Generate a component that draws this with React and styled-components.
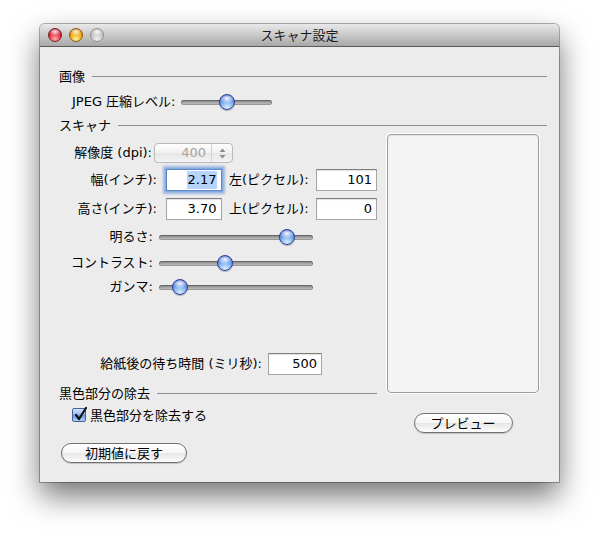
import styled, { createGlobalStyle, css } from "styled-components";

const GlobalStyle = createGlobalStyle`
  html, body {
    margin: 0;
    background: #fff;
  }
  body {
    min-height: 537px;
    font-family: "Lucida Grande", "DejaVu Sans", "Noto Sans CJK JP", sans-serif;
    font-size: 13px;
    color: #000;
  }
`;

const jp = `"Noto Sans CJK JP", "DejaVu Sans", sans-serif`;

const Page = styled.div`
  padding: 24px 0 55px 40px;
`;

const Window = styled.div`
  width: 519px;
  height: 458px;
  background: #ececec;
  border-radius: 5px 5px 0 0;
  box-shadow: 0 0 0 1px rgba(0, 0, 0, 0.3), 0 14px 30px rgba(0, 0, 0, 0.55);
  display: flex;
  flex-direction: column;
`;

const TitleBar = styled.div`
  height: 22px;
  flex-shrink: 0;
  display: grid;
  grid-template-columns: 1fr auto 1fr;
  align-items: center;
  border-radius: 5px 5px 0 0;
  background: linear-gradient(#e9e9e9, #c9c9c9 50%, #a8a8a8);
  border-bottom: 1px solid #5a5a5a;
`;

const Title = styled.div`
  font-family: ${jp};
  font-size: 13px;
  line-height: 22px;
  color: #1c1c1c;
`;

const Lights = styled.div`
  display: flex;
  gap: 7px;
  padding-left: 8px;
`;

const lightColors = {
  red: ["#ffb0b0", "#e4263c", "#8e0e1c", "#7a1a22"],
  yellow: ["#fff0a0", "#f2a400", "#a26000", "#8a5a10"],
  grey: ["#f0f0f0", "#c4c4c4", "#9a9a9a", "#909090"],
};

const Light = styled.div`
  width: 14px;
  height: 14px;
  border-radius: 50%;
  box-sizing: border-box;
  border: 1px solid ${(p) => lightColors[p.$c][3]};
  background: radial-gradient(ellipse 55% 35% at 50% 22%, rgba(255, 255, 255, 0.9), rgba(255, 255, 255, 0)),
    radial-gradient(circle at 50% 85%, ${(p) => lightColors[p.$c][0]}, ${(p) => lightColors[p.$c][1]} 55%, ${(p) => lightColors[p.$c][2]});
`;

const Content = styled.div`
  padding: 20px 12px 0 19px;
`;

const SectionHead = styled.div`
  display: flex;
  align-items: center;
  height: 18px;
  line-height: 18px;
  font-family: ${jp};
  margin-top: ${(p) => p.$mt || 0}px;
  &::after {
    content: "";
    flex: 1;
    height: 1px;
    margin-left: 7px;
    background: #8e8e8e;
  }
`;

const Row = styled.div`
  display: flex;
  align-items: center;
  height: ${(p) => p.$h || 18}px;
  margin-top: ${(p) => p.$mt || 0}px;
  padding-left: ${(p) => p.$indent || 0}px;
`;

const Label = styled.div`
  width: ${(p) => p.$w}px;
  margin-right: ${(p) => p.$mr || 0}px;
  flex-shrink: 0;
  text-align: right;
  white-space: nowrap;
  line-height: 18px;
  color: #000;
`;

const Columns = styled.div`
  display: grid;
  grid-template-columns: 318px 152px;
  column-gap: 10px;
`;

const LeftCol = styled.div`
  display: flex;
  flex-direction: column;
`;

const RightCol = styled.div`
  display: flex;
  flex-direction: column;
  align-items: center;
`;

const Popup = styled.div`
  width: 79px;
  height: 20px;
  box-sizing: border-box;
  border: 1px solid #b9b9b9;
  border-radius: 4px;
  background: linear-gradient(#fefefe, #f1f1f1 50%, #e6e6e6 51%, #f4f4f4);
  display: flex;
  align-items: stretch;
  color: #a3a3a3;
`;

const PopupValue = styled.div`
  flex: 1;
  text-align: right;
  padding-right: 5px;
  line-height: 18px;
`;

const PopupArrows = styled.div`
  width: 20px;
  border-left: 1px solid #d2d2d2;
  display: flex;
  align-items: center;
  justify-content: center;
`;

const Field = styled.div`
  width: ${(p) => p.$w}px;
  height: 22px;
  box-sizing: border-box;
  background: #fff;
  border: 1px solid #a4a4a4;
  border-top-color: #7e7e7e;
  box-shadow: inset 0 1px 1px rgba(0, 0, 0, 0.12);
  text-align: right;
  padding-right: 4px;
  line-height: 20px;
  ${(p) =>
    p.$focus &&
    css`
      border-color: #5f86c8;
      box-shadow: 0 0 0 1px #86aae0, 0 0 2px 3px rgba(110, 155, 222, 0.65);
    `}
`;

const Selected = styled.span`
  background: #b5d5ff;
  padding: 1px 0 2px 1px;
`;

const Track = styled.div`
  position: relative;
  width: ${(p) => p.$w}px;
  height: 5px;
  border-radius: 3px;
  background: linear-gradient(#7b7b7b, #a6a6a6 50%, #cbcbcb);
  box-shadow: inset 0 0 0 1px rgba(0, 0, 0, 0.22);
`;

const Knob = styled.div`
  position: absolute;
  top: 50%;
  width: 16px;
  height: 16px;
  margin: -8px 0 0 -8px;
  border-radius: 50%;
  box-sizing: border-box;
  border: 1px solid #2c3c9c;
  background: radial-gradient(ellipse 55% 35% at 50% 24%, rgba(255, 255, 255, 0.95), rgba(255, 255, 255, 0)),
    radial-gradient(circle at 50% 90%, #dcefff 0%, #86b8f0 40%, #3e66cc 85%);
  box-shadow: 0 1px 1px rgba(0, 0, 0, 0.25);
`;

const CheckBox = styled.div`
  width: 14px;
  height: 14px;
  box-sizing: border-box;
  border: 1px solid #45609f;
  border-radius: 2px;
  background: linear-gradient(#d3e6fc, #8fb4ea 50%, #6995e0 51%, #b0d2f8);
  position: relative;
  margin-right: 4px;
  svg {
    position: absolute;
    left: 0;
    top: -3px;
  }
`;

const CheckText = styled.div`
  font-family: ${jp};
  line-height: 18px;
`;

const PushButton = styled.button`
  width: ${(p) => p.$w}px;
  height: 20px;
  margin-left: ${(p) => p.$ml || 0}px;
  margin-top: ${(p) => p.$mt || 0}px;
  padding: 0;
  border-radius: 10px;
  border: 1px solid #707070;
  background: linear-gradient(#ffffff, #f6f6f6 50%, #e6e6e6 51%, #fdfdfd);
  box-shadow: 0 1px 1px rgba(0, 0, 0, 0.18);
  font-family: ${jp};
  font-size: 13px;
  line-height: 18px;
  color: #000;
`;

const PreviewBox = styled.div`
  width: 152px;
  height: 259px;
  box-sizing: border-box;
  border: 1px solid #9e9e9e;
  border-radius: 4px;
  background: #f4f4f4;
  box-shadow: 0 0 0 1px rgba(255, 255, 255, 0.9), inset 0 1px 1px rgba(0, 0, 0, 0.08);
`;

function Slider({ width, value }) {
  return (
    <Track $w={width}>
      <Knob style={{ left: `${8 + value * (width - 16)}px` }} />
    </Track>
  );
}

function Arrows() {
  return (
    <svg width="7" height="11" viewBox="0 0 7 11">
      <path d="M3.5 0.5 L6.5 4 L0.5 4 Z" fill="#8c8c8c" />
      <path d="M3.5 10.5 L6.5 7 L0.5 7 Z" fill="#8c8c8c" />
    </svg>
  );
}

export default function App() {
  return (
    <Page>
      <GlobalStyle />
      <Window>
        <TitleBar>
          <Lights>
            <Light $c="red" />
            <Light $c="yellow" />
            <Light $c="grey" />
          </Lights>
          <Title>スキャナ設定</Title>
          <div />
        </TitleBar>
        <Content>
          <SectionHead>画像</SectionHead>
          <Row $mt={8} $indent={13}>
            <Label $w={102} $mr={7}>JPEG 圧縮レベル:</Label>
            <Slider width={91} value={0.5} />
          </Row>
          <SectionHead $mt={5}>スキャナ</SectionHead>
          <Columns>
            <LeftCol>
              <Row $mt={9} $h={20}>
                <Label $w={93} $mr={2}>解像度 (dpi):</Label>
                <Popup>
                  <PopupValue>400</PopupValue>
                  <PopupArrows>
                    <Arrows />
                  </PopupArrows>
                </Popup>
              </Row>
              <Row $mt={6} $h={22}>
                <Label $w={98} $mr={9}>幅(インチ):</Label>
                <Field $w={56} $focus>
                  <Selected>2.17</Selected>
                </Field>
                <Label $w={87} $mr={7}>左(ピクセル):</Label>
                <Field $w={62}>101</Field>
              </Row>
              <Row $mt={7} $h={22}>
                <Label $w={98} $mr={9}>高さ(インチ):</Label>
                <Field $w={56}>3.70</Field>
                <Label $w={87} $mr={7}>上(ピクセル):</Label>
                <Field $w={62}>0</Field>
              </Row>
              <Row $mt={8}>
                <Label $w={94} $mr={6}>明るさ:</Label>
                <Slider width={154} value={0.87} />
              </Row>
              <Row $mt={8}>
                <Label $w={94} $mr={6}>コントラスト:</Label>
                <Slider width={154} value={0.42} />
              </Row>
              <Row $mt={6}>
                <Label $w={94} $mr={6}>ガンマ:</Label>
                <Slider width={154} value={0.095} />
              </Row>
              <Row $mt={57} $h={22}>
                <Label $w={203} $mr={6}>給紙後の待ち時間 (ミリ秒):</Label>
                <Field $w={54}>500</Field>
              </Row>
              <SectionHead $mt={9}>黒色部分の除去</SectionHead>
              <Row $mt={4} $indent={13}>
                <CheckBox>
                  <svg width="15" height="16" viewBox="0 0 15 16">
                    <path d="M3 9 L6 13 L13 2" fill="none" stroke="#111" strokeWidth="2.2" strokeLinecap="round" strokeLinejoin="round" />
                  </svg>
                </CheckBox>
                <CheckText>黒色部分を除去する</CheckText>
              </Row>
              <Row $mt={19} $h={20}>
                <PushButton $w={126} $ml={2}>初期値に戻す</PushButton>
              </Row>
            </LeftCol>
            <RightCol>
              <PreviewBox />
              <PushButton $w={99} $mt={20}>プレビュー</PushButton>
            </RightCol>
          </Columns>
        </Content>
      </Window>
    </Page>
  );
}
